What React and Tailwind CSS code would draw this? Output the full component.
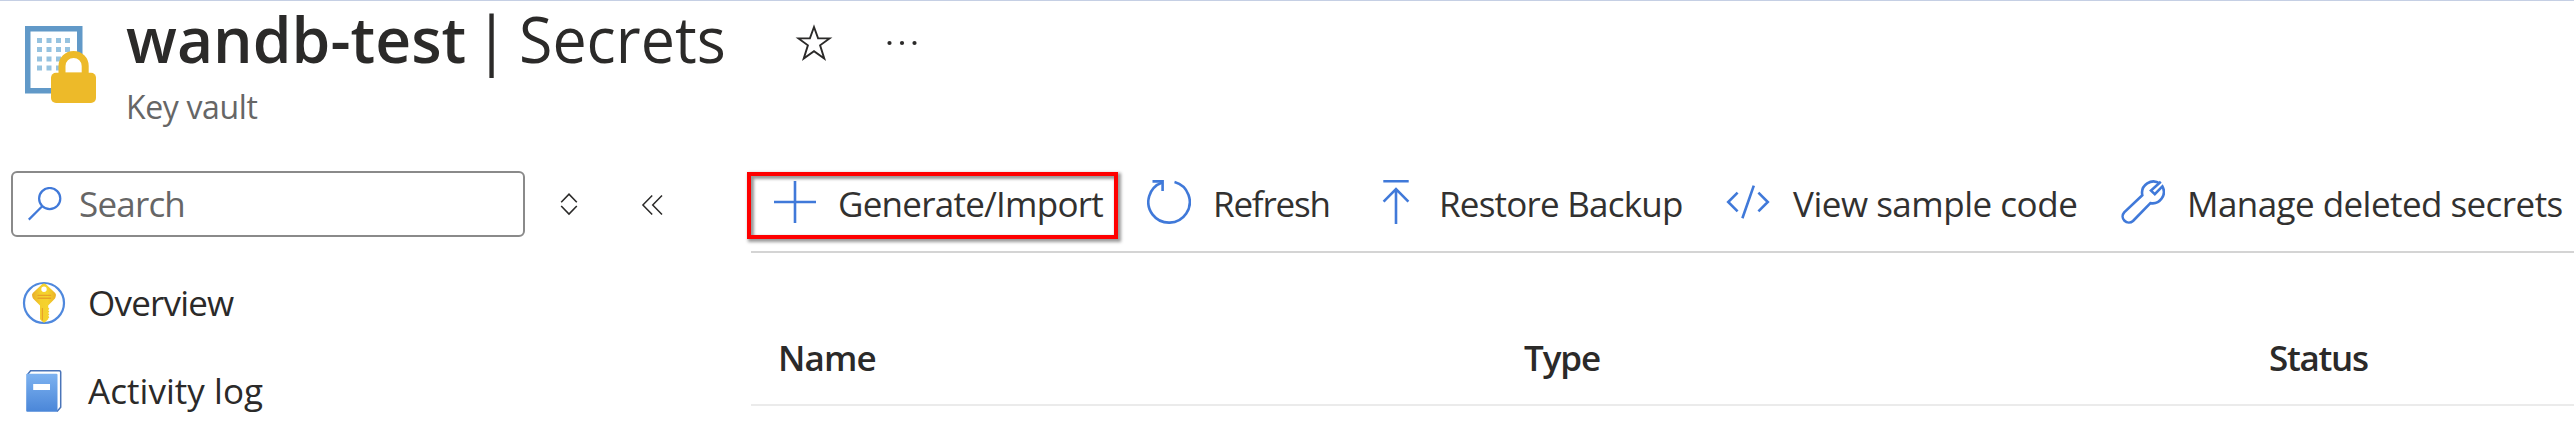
const BLUE = "#4079d9";

function VaultIcon() {
  const xs = [37, 46.5, 56, 65];
  const ys = [38, 47, 56.5, 65.5];
  return (
    <svg className="block h-[79px] w-[73px]" viewBox="24 25 73 79">
      <rect x="27.75" y="28.75" width="52" height="62" fill="#fff" stroke="#6199c8" strokeWidth="5.5" />
      {ys.map((y) => xs.map((x) => <rect key={`${x}-${y}`} x={x} y={y} width="5" height="5" fill="#96c3e0" />))}
      <path d="M62 76V66a11.6 11.6 0 0 1 23.2 0v10z" fill="#fff" stroke="#edba29" strokeWidth="7" />
      <rect x="51" y="72.7" width="45" height="30.3" rx="5" fill="#edba29" />
    </svg>
  );
}

function StarIcon() {
  return (
    <svg className="block h-[42px] w-[42px]" viewBox="765.7 21 42 42" fill="none" stroke="#2b2a29" strokeWidth="1.9">
      <path strokeMiterlimit="10" d="M786.7 27 790.8 38.4H802.2L792.8 45.3 797 58.6 786.7 51.2 776.4 58.6 780.6 45.3 771.2 38.4H782.6Z" />
    </svg>
  );
}

function DotsIcon() {
  return (
    <svg className="block h-2 w-8" viewBox="0 0 32 8" fill="#2b2a29">
      <circle cx="3.5" cy="4" r="2.1" />
      <circle cx="16" cy="4" r="2.1" />
      <circle cx="28.5" cy="4" r="2.1" />
    </svg>
  );
}

function SearchIcon() {
  return (
    <svg className="block h-[34px] w-[34px]" viewBox="28 188 34 34" fill="none" stroke={BLUE} strokeWidth="2.2">
      <circle cx="49.7" cy="199.6" r="10.6" />
      <path d="M42.2 207.2 28.8 220.6" />
    </svg>
  );
}

function SortIcon() {
  return (
    <svg className="block h-[24px] w-[18px]" viewBox="560 192 18 24" fill="none" stroke="#2b2a29" strokeWidth="1.6">
      <path d="M561.2 202.2 569 194.2 576.8 202.2M561.2 206 569 214 576.8 206" />
    </svg>
  );
}

function CollapseIcon() {
  return (
    <svg className="block h-[24px] w-[22px]" viewBox="641 193 22 24" fill="none" stroke="#2b2a29" strokeWidth="1.5">
      <path d="M652.2 195.5 642.9 205 652.2 214.6M662 195.5 652.7 205 662 214.6" />
    </svg>
  );
}

function KeyIcon() {
  return (
    <svg className="block h-11 w-11" viewBox="22 281 44 44">
      <defs>
        <linearGradient id="key" x1="0" x2="1">
          <stop offset="0" stopColor="#e8ac28" />
          <stop offset="0.35" stopColor="#f4cf2c" />
          <stop offset="0.65" stopColor="#f5d32c" />
          <stop offset="1" stopColor="#eab028" />
        </linearGradient>
      </defs>
      <circle cx="44" cy="303" r="20" fill="#fff" stroke="#4f88dd" strokeWidth="2.2" />
      <path
        fill="url(#key)"
        fillRule="evenodd"
        d="M46.2 284.4 55.2 293.1Q56.6 294.7 55.6 297L55 298.5 48.2 305.6V307.6L49.3 308.8 48.2 310.2 49.3 311.6 48.2 313 49.3 314.4 48.2 315.8 49.3 317.2 48.2 318.6V319.2L44.9 322.2Q44 322.8 43.1 322.2L40 319.2V305.6L33 298.5 32.4 297Q31.4 294.7 32.8 293.1L41.8 284.4Q44 282.6 46.2 284.4ZM44 286.6a2.7 2.7 0 1 0 0 5.4a2.7 2.7 0 1 0 0-5.4Z"
      />
      <path d="M38 295.4H50.6M38 298.2H50.6" stroke="#e8a227" strokeWidth="1.4" strokeLinecap="round" />
      <path d="M42.4 308V320.5" stroke="#e8a227" strokeWidth="1.2" />
    </svg>
  );
}

function BookIcon() {
  return (
    <svg className="block h-11 w-11" viewBox="22 369 44 44">
      <defs>
        <linearGradient id="book" x1="0" x2="0" y1="0" y2="1">
          <stop offset="0" stopColor="#7db2f0" />
          <stop offset="1" stopColor="#4a86d8" />
        </linearGradient>
      </defs>
      <path d="M27.2 375 30.6 370.8H59.4Q60.7 370.8 60.7 372V407.2L57 411.4" fill="#fff" stroke="#4a74b8" strokeWidth="1.5" />
      <rect x="26.2" y="373.8" width="31.3" height="38" rx="1" fill="url(#book)" />
      <rect x="33.2" y="384" width="16.8" height="6" fill="#fff" />
    </svg>
  );
}

function ToolIcon({ children, view }) {
  return (
    <svg className="block h-11 w-11 shrink-0" viewBox={view} fill="none" stroke={BLUE} strokeWidth="2.6">
      {children}
    </svg>
  );
}

const mainText = "whitespace-nowrap text-[35px] leading-[47px]";

export default function App() {
  return (
    <div className="h-[439px] w-[2574px] border-t border-[#c5cfe4] bg-white font-['Open_Sans','Noto_Sans',sans-serif] text-[#2b2a29]">
      <header className="flex h-[149px] pl-6">
        <div className="w-[102px] pt-6">
          <VaultIcon />
        </div>
        <div>
          <div className="flex h-[75px]">
            <h1 className="flex w-[667px] whitespace-nowrap text-[64px] leading-[75px]">
              <span className="w-[348px] shrink-0 origin-left scale-x-[0.975] font-semibold">wandb-test</span>
              <span className="w-[45px] shrink-0">|</span>
              <span className="w-[220px] shrink-0 origin-left scale-x-[0.952]">Secrets</span>
            </h1>
            <div className="pt-5">
              <StarIcon />
            </div>
            <div className="pl-[51px] pt-[38px]">
              <DotsIcon />
            </div>
          </div>
          <p className="mt-[8px] text-[32px] leading-[45px] tracking-[-0.36px] text-[#666]">Key vault</p>
        </div>
      </header>

      <div className="flex">
        <aside className="w-[751px] pl-[11px] pt-[21px]">
          <div className="flex items-center">
            <div className="flex h-[66px] w-[514px] items-center rounded-[6px] border-2 border-[#8a8a8a] pl-[15px]">
              <SearchIcon />
              <span className="mb-[1px] ml-[17px] text-[35px] leading-[47px] tracking-[-0.8px] text-[#666]">Search</span>
            </div>
            <div className="ml-[35px]">
              <SortIcon />
            </div>
            <div className="ml-[63px] pt-[2px]">
              <CollapseIcon />
            </div>
          </div>
          <nav className="pl-[11px] pt-[22px]">
            <a className="flex h-[88px] items-center gap-[22px]">
              <KeyIcon />
              <span className={`${mainText} mb-[1px] tracking-[-0.79px]`}>Overview</span>
            </a>
            <a className="flex h-[88px] items-center gap-[22px]">
              <BookIcon />
              <span className={`${mainText} mb-[1px] tracking-[0.05px]`}>Activity log</span>
            </a>
          </nav>
        </aside>

        <main className="w-[1823px]">
          <div className="relative flex h-[103px] items-start border-b-2 border-[#d4d4d4] pl-[22px] pt-[30px] text-[#323130]">
            <div className="absolute left-[-4px] top-[22px] h-[67px] w-[371px] border-4 border-[#fe0000] shadow-[2px_2px_3px_1px_rgba(0,0,0,0.4),inset_2px_2px_3px_1px_rgba(0,0,0,0.4)]" />
            <div className="flex w-[374px] gap-[21px]">
              <ToolIcon view="773 180 44 44">
                <path d="M774 202H816M795 181V223" />
              </ToolIcon>
              <span className={`${mainText} tracking-[-0.76px]`}>Generate/Import</span>
            </div>
            <div className="flex w-[227px] gap-[22px]">
              <ToolIcon view="1147 180 44 44">
                <path d="M1174.5 182A20.7 20.7 0 1 1 1162.3 182.4" />
                <path d="M1152.5 181.4H1162.6V191" />
              </ToolIcon>
              <span className={`${mainText} tracking-[-1.2px]`}>Refresh</span>
            </div>
            <div className="flex w-[352px] gap-[21px]">
              <ToolIcon view="1374 180 44 44">
                <path d="M1383.3 181.3H1408.7M1396 224V189.5M1383.6 201.6 1396 189.2 1408.4 201.6" />
              </ToolIcon>
              <span className={`${mainText} tracking-[-0.78px]`}>Restore Backup</span>
            </div>
            <div className="flex w-[395px] gap-[23px]">
              <ToolIcon view="1726 180 44 44">
                <path d="M1737.6 192.6 1728.2 202 1737.6 211.4M1758.4 192.6 1767.8 202 1758.4 211.4M1753.8 185.6 1742.4 218.2" />
              </ToolIcon>
              <span className={`${mainText} tracking-[-0.48px]`}>View sample code</span>
            </div>
            <div className="flex gap-[22px]">
              <ToolIcon view="2121 180 44 44">
                <path d="M2160 183.6A11.4 11.4 0 0 0 2142.3 195.2L2124.2 212.3A6.2 6.2 0 0 0 2133 221L2150.4 203.1A11.4 11.4 0 0 0 2162.4 186.4L2154.8 194.2 2151 190.6 2160.8 181.8" />
              </ToolIcon>
              <span className={`${mainText} tracking-[-0.56px]`}>Manage deleted secrets</span>
            </div>
          </div>

          <div className="flex h-[153px] items-end border-b-2 border-[#ebebeb] pb-[23px] pl-[27px] font-semibold">
            <span className={`${mainText} w-[746px] tracking-[-0.9px]`}>Name</span>
            <span className={`${mainText} w-[745px] tracking-[-1.1px]`}>Type</span>
            <span className={`${mainText} tracking-[-1.3px]`}>Status</span>
          </div>
        </main>
      </div>
    </div>
  );
}
